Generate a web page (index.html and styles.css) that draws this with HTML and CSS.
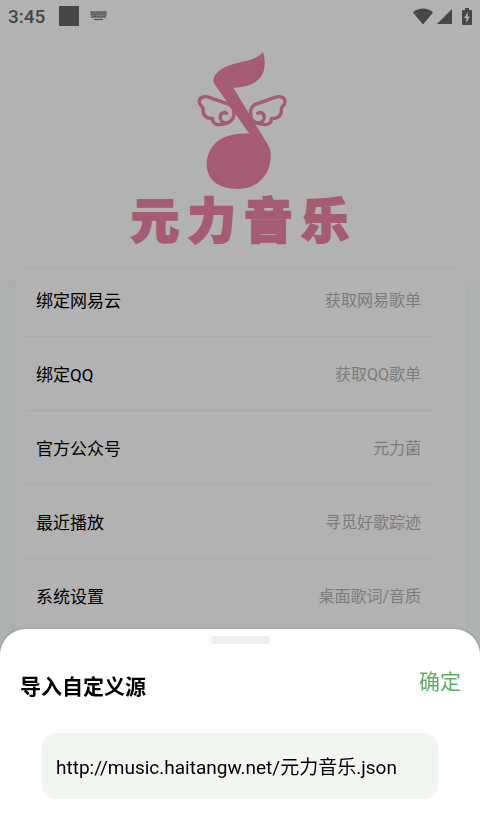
FILE: index.html
```html
<!DOCTYPE html>
<html lang="zh-CN">
<head>
    <meta charset="UTF-8">
    <meta name="viewport" content="width=device-width, initial-scale=1.0">
    <title>元力音乐</title>
    <link rel="stylesheet" href="styles.css">
</head>
<body>
    <main class="page">
        <div class="status-bar">
            <span class="time">3:45</span>
            <span class="app-square"></span>
            <svg class="keyboard" width="17" height="10" viewBox="0 0 17 10">
                <path d="M0 0h17l-1 7H1z" fill="#aaa"/>
                <path d="M1 1.5h15M2 3.5h14M2 5.5h13" stroke="#777" stroke-width="1" stroke-dasharray="1.5 1"/>
                <path d="M4 8.5h9" stroke="#777" stroke-width="1.3"/>
            </svg>
            <div class="status-icons">
                <svg width="22" height="17" viewBox="0 0 22 17">
                    <path d="M11 16.5L1 4.5C4 1.500 7.500.5 11 .5s7 1 10 4z" fill="#666"/>
                </svg>
                <svg width="17" height="17" viewBox="0 0 17 17">
                    <path d="M16 1v15H1z" fill="#666"/>
                </svg>
                <svg class="battery" width="12" height="19" viewBox="0 0 12 19">
                    <path d="M4 1h4v2h2q1 0 1 1v13q0 1-1 1H2q-1 0-1-1V4q0-1 1-1h2z" fill="#666"/>
                    <path d="M7 5L3 11h2.500l-.5 5 4-6.500H6.500z" fill="#fff"/>
                </svg>
            </div>
        </div>

        <header class="brand">
            <svg class="logo" width="96" height="140" viewBox="21 30 288 420">
                <path d="M234 36C242 62 241 91 229 108C213 132 183 142 145 143L249 315C256 327 258 338 257 355C254 410 212 447 157 447C102 447 65 420 65 373C66 319 107 275 193 281L87 130C82 113 92 99 110 87C152 61 205 70 234 36Z" fill="#ec83a3"/>
                <g fill="none" stroke="#ec83a3" stroke-width="10" stroke-linecap="round" stroke-linejoin="round">
                    <path d="M134 194L73 172C58 167 43 171 43 185C43 195 51 199 54 204C52 220 57 232 75 235H83C81 247 92 257 108 253C132 253 147 239 147 221"/>
                    <path d="M125 220C115 213 103 222 106 235C109 246 118 251 126 248"/>
                    <path d="M134 194C144 202 149 211 147 221"/>
                    <path d="M209 194L270 172C285 167 300 171 300 185C300 195 292 199 289 204C291 220 286 232 268 235H259C261 247 251 257 235 253C211 253 195 239 197 221"/>
                    <path d="M218 220C228 213 240 222 237 235C234 246 225 251 217 248"/>
                    <path d="M209 194C199 202 195 211 197 221"/>
                </g>
            </svg>
            <h1 class="wordmark"><span>元</span><span>力</span><span>音</span><span>乐</span></h1>
        </header>

        <section class="content">
            <ul class="card">
                <li class="row"><span>绑定网易云</span><span class="hint">获取网易歌单</span></li>
                <li class="row"><span>绑定QQ</span><span class="hint">获取QQ歌单</span></li>
                <li class="row"><span>官方公众号</span><span class="hint">元力菌</span></li>
                <li class="row"><span>最近播放</span><span class="hint">寻觅好歌踪迹</span></li>
                <li class="row"><span>系统设置</span><span class="hint">桌面歌词/音质</span></li>
            </ul>
        </section>
    </main>

    <div class="scrim"></div>

    <form class="sheet">
        <div class="handle"></div>
        <div class="sheet-head">
            <label class="sheet-title" for="sourceUrl">导入自定义源</label>
            <button class="confirm" type="button">确定</button>
        </div>
        <input class="source" type="text" id="sourceUrl" value="http://music.haitangw.net/元力音乐.json">
    </form>
</body>
</html>
```

FILE: styles.css
```css
* {
    box-sizing: border-box;
}
body {
    margin: 0;
    height: 100vh;
    overflow: hidden;
    background-color: white;
    color: black;
    font-family: Roboto, "Noto Sans CJK SC", sans-serif;
}
.page {
    display: flex;
    flex-direction: column;
    min-height: 100%;
}

/* status bar */
.status-bar {
    display: flex;
    align-items: center;
    height: 32px;
    padding: 0 7px 0 8px;
    color: #666;
}
.time {
    width: 51px;
    font-size: 19px;
    font-weight: 500;
}
.app-square {
    width: 20px;
    height: 20px;
    margin-right: 11px;
    background-color: #666;
}
.status-icons {
    display: flex;
    align-items: center;
    gap: 2px;
    margin-left: auto;
}
.battery {
    margin-left: 6px;
}

/* logo */
.brand {
    display: flex;
    flex-direction: column;
    align-items: center;
    height: 248px;
    padding-top: 18px;
}
.wordmark {
    display: flex;
    justify-content: space-between;
    width: 218px;
    margin: 0;
    color: #ec83a3;
    font-size: 48px;
    font-weight: 900;
    line-height: 64px;
    -webkit-text-stroke: 2px #ec83a3;
}

/* menu */
.content {
    display: flex;
    flex: 1;
    padding: 0 13px 0 14px;
    background-color: #f7fdfa;
}
.card {
    flex: 1;
    margin: -13px 0 0;
    padding: 0 34px 0 10px;
    background-color: white;
    border: 1px solid #f6f6f6;
    border-radius: 20px;
    list-style: none;
}
.row {
    display: flex;
    justify-content: space-between;
    align-items: center;
    padding: 26px 11px 23px;
    border-bottom: 1px solid #f4f4f4;
    font-size: 17px;
    line-height: 24px;
}
.row:first-child {
    padding-top: 21px;
}
.row:last-child {
    border-bottom: none;
}
.hint {
    color: #b2b2b2;
    font-size: 16px;
}

.scrim {
    position: fixed;
    inset: 0;
    background-color: rgba(0, 0, 0, 0.3);
}

/* bottom sheet */
.sheet {
    position: fixed;
    left: 0;
    right: 0;
    bottom: 0;
    padding: 7px 19px 14px 20px;
    background-color: white;
    border-radius: 26px 26px 0 0;
    box-shadow: 0 0 3px rgba(0, 0, 0, 0.2);
}
.handle {
    width: 60px;
    height: 8px;
    margin: 0 auto;
    background-color: #efefef;
    border-radius: 4px;
}
.sheet-head {
    display: flex;
    justify-content: space-between;
    align-items: flex-start;
    height: 66px;
    margin-bottom: 23px;
    padding-top: 22px;
}
.sheet-title {
    padding-top: 5px;
    font-size: 21px;
    font-weight: 700;
    line-height: 32px;
}
.confirm {
    padding: 0;
    background: none;
    border: none;
    color: #5fad65;
    font-family: inherit;
    font-size: 21px;
    line-height: 32px;
    cursor: pointer;
}
.source {
    display: block;
    width: calc(100% - 45px);
    height: 66px;
    margin: 0 23px 0 22px;
    padding: 0 14px 2px;
    background-color: #f0f7f0;
    border: none;
    border-radius: 14px;
    color: black;
    font-family: inherit;
    font-size: 19px;
    outline: none;
}
```
